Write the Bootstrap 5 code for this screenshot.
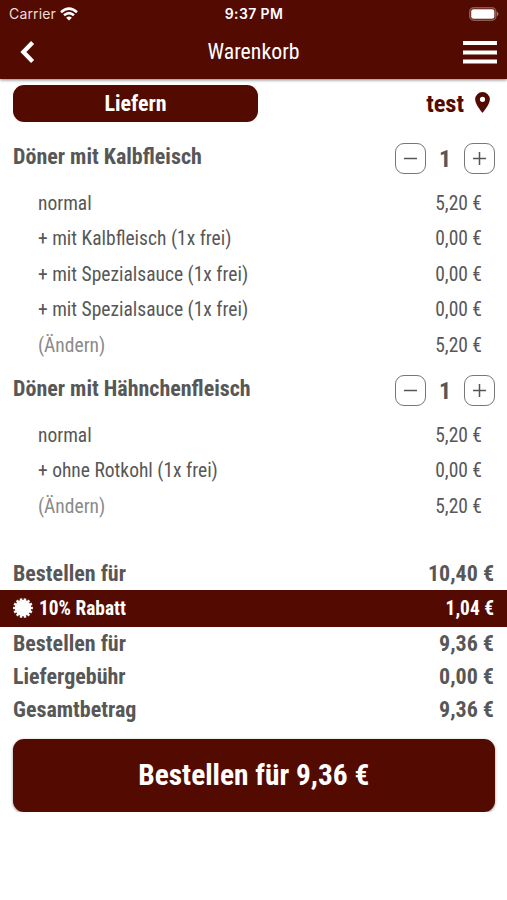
<!DOCTYPE html>
<html lang="de">
<head>
<meta charset="utf-8">
<meta name="viewport" content="width=device-width, initial-scale=1">
<title>Warenkorb</title>
<link href="https://cdn.jsdelivr.net/npm/bootstrap@5.3.0/dist/css/bootstrap.min.css" rel="stylesheet">
<style>
:root { --brand: #530b01; --ink: #575757; }
body { font-family: "Roboto Condensed", Roboto, sans-serif; font-stretch: 75%; color: var(--ink); background: #fff; line-height: 1; overflow: hidden; }
svg { display: block; }
.app-top { background: var(--brand); color: #fff; height: 79px; box-shadow: 0 1px 3px rgba(0,0,0,.5); }
.status { height: 27px; font-family: Inter, sans-serif; font-stretch: 100%; font-size: 14px; padding: 0 8px 0 9px; }
.carrier { color: #f0dcd8; letter-spacing: .15px; }
.clock { font-weight: 600; font-size: 14px; letter-spacing: .4px; }
.titlebar { height: 50px; padding: 0 10px; }
.back { margin-left: 10px; }
.title { font-size: 21.8px; font-weight: 400; }
.side { flex: 1 1 0; }
.mode { height: 52px; padding: 6px 17px 0 13px; }
.btn-mode { width: 245px; height: 37px; border-radius: 11px; background: var(--brand); color: #fff; font-weight: 700; font-size: 22px; line-height: 1; }
.place { color: var(--brand); font-size: 24.5px; font-weight: 700; gap: 11px; padding-top: 7px; }
.pin { margin-bottom: 3px; }
.item-head { height: 54.5px; padding: 0 12px 0 13px; }
.item-name { font-size: 22px; font-weight: 700; padding-bottom: 2px; }
.step { width: 31px; height: 31px; border: 1.3px solid #777; border-radius: 9px; color: #555; background: #fff; }
.qty { width: 38px; font-size: 24px; font-weight: 700; padding-top: 1px; }
.line { height: 35.5px; padding: 0 25px 0 38px; font-size: 19.5px; }
.change { color: #8a8a8a; }
.totals { padding-top: 33px; }
.sum { height: 33px; padding: 0 13px; font-size: 22px; font-weight: 700; }
.discount { height: 37px; background: var(--brand); color: #fff; padding: 1px 13px 0; font-size: 19.4px; font-weight: 700; }
.seal { margin: 0 6px 2px 0; }
.order { height: 73px; margin: 12.5px 12.5px 0 13px; border-radius: 11px; background: var(--brand); color: #fff; font-size: 29.4px; font-weight: 700; line-height: 1; box-shadow: 0 1px 3px rgba(0,0,0,.45); }
.order span { display: block; padding-top: 2px; }
</style>
</head>
<body>
<header class="app-top">
  <div class="status d-flex align-items-center">
    <div class="side d-flex align-items-center"><span class="carrier me-1">Carrier</span>
      <svg width="18" height="14" viewBox="0 0 18 14" fill="none" stroke="#fff" stroke-width="2.5"><path d="M1 5.2Q9-2 17 5.2M4 8.300q5-4.400 10 0"/><path d="M9 13.600 6.100 10.700q2.900-2.500 5.800 0z" fill="#fff" stroke="none"/></svg>
    </div>
    <span class="clock">9:37 PM</span>
    <div class="side d-flex justify-content-end">
      <svg width="30" height="14" viewBox="0 0 30 14"><rect x=".8" y=".8" width="26" height="12.400" rx="4" fill="none" stroke="#8d5a52" stroke-width="1.600"/><rect x="2.200" y="2.200" width="23.200" height="9.600" rx="2.300" fill="#fff"/><path d="M28 4.800q3 2.200 0 4.400z" fill="#a37b75"/></svg>
    </div>
  </div>
  <nav class="titlebar d-flex align-items-center">
    <div class="side"><svg class="back" width="15" height="22" viewBox="0 0 15 22" fill="none" stroke="#fff" stroke-width="4.300"><path d="M12.600 1.600 3.400 11l9.200 9.400"/></svg></div>
    <h1 class="title m-0">Warenkorb</h1>
    <div class="side d-flex justify-content-end"><svg width="34" height="23" viewBox="0 0 34 23" fill="#fff"><path d="M0 0h34v4H0zM0 9.400h34v4H0zM0 18.600h34v4H0z"/></svg></div>
  </nav>
</header>

<main>
  <section class="mode d-flex justify-content-between align-items-start">
    <button class="btn btn-mode p-0 border-0">Liefern</button>
    <div class="place d-flex align-items-center"><span>test</span>
      <svg class="pin" width="15" height="21" viewBox="0 0 14 20" fill="#530b01"><path fill-rule="evenodd" d="M7 0a7 7 0 0 0-7 7c0 5.200 7 13 7 13s7-7.800 7-13a7 7 0 0 0-7-7zm0 4.500a2.500 2.500 0 1 1 0 5 2.500 2.500 0 0 1 0-5z"/></svg>
    </div>
  </section>

  <section>
    <div class="item-head d-flex align-items-center justify-content-between">
      <span class="item-name">Döner mit Kalbfleisch</span>
      <div class="d-flex align-items-center">
        <button class="step p-0 d-flex align-items-center justify-content-center" aria-label="Weniger"><svg width="13" height="13" viewBox="0 0 13 13" stroke="currentColor" stroke-width="1.500"><path d="M0 6.500h13"/></svg></button>
        <span class="qty text-center">1</span>
        <button class="step p-0 d-flex align-items-center justify-content-center" aria-label="Mehr"><svg width="13" height="13" viewBox="0 0 13 13" stroke="currentColor" stroke-width="1.500"><path d="M0 6.500h13M6.500 0v13"/></svg></button>
      </div>
    </div>
    <div class="line d-flex align-items-center justify-content-between"><span>normal</span><span>5,20 €</span></div>
    <div class="line d-flex align-items-center justify-content-between"><span>+ mit Kalbfleisch (1x frei)</span><span>0,00 €</span></div>
    <div class="line d-flex align-items-center justify-content-between"><span>+ mit Spezialsauce (1x frei)</span><span>0,00 €</span></div>
    <div class="line d-flex align-items-center justify-content-between"><span>+ mit Spezialsauce (1x frei)</span><span>0,00 €</span></div>
    <div class="line d-flex align-items-center justify-content-between"><span class="change">(Ändern)</span><span>5,20 €</span></div>
  </section>

  <section>
    <div class="item-head d-flex align-items-center justify-content-between">
      <span class="item-name">Döner mit Hähnchenfleisch</span>
      <div class="d-flex align-items-center">
        <button class="step p-0 d-flex align-items-center justify-content-center" aria-label="Weniger"><svg width="13" height="13" viewBox="0 0 13 13" stroke="currentColor" stroke-width="1.500"><path d="M0 6.500h13"/></svg></button>
        <span class="qty text-center">1</span>
        <button class="step p-0 d-flex align-items-center justify-content-center" aria-label="Mehr"><svg width="13" height="13" viewBox="0 0 13 13" stroke="currentColor" stroke-width="1.500"><path d="M0 6.500h13M6.500 0v13"/></svg></button>
      </div>
    </div>
    <div class="line d-flex align-items-center justify-content-between"><span>normal</span><span>5,20 €</span></div>
    <div class="line d-flex align-items-center justify-content-between"><span>+ ohne Rotkohl (1x frei)</span><span>0,00 €</span></div>
    <div class="line d-flex align-items-center justify-content-between"><span class="change">(Ändern)</span><span>5,20 €</span></div>
  </section>

  <section class="totals">
    <div class="sum d-flex align-items-center justify-content-between"><span>Bestellen für</span><span>10,40 €</span></div>
    <div class="discount d-flex align-items-center justify-content-between">
      <div class="d-flex align-items-center"><svg class="seal" width="20" height="20" viewBox="-10 -10 20 20"><circle r="8.300" fill="#fff"/><circle r="8.700" fill="none" stroke="#fff" stroke-width="2.400" pathLength="28" stroke-dasharray="1.200 .800" stroke-dashoffset=".600"/></svg><span>10% Rabatt</span></div>
      <span>1,04 €</span>
    </div>
    <div class="sum d-flex align-items-center justify-content-between"><span>Bestellen für</span><span>9,36 €</span></div>
    <div class="sum d-flex align-items-center justify-content-between"><span>Liefergebühr</span><span>0,00 €</span></div>
    <div class="sum d-flex align-items-center justify-content-between"><span>Gesamtbetrag</span><span>9,36 €</span></div>
  </section>
  <div class="d-flex"><button class="btn order p-0 border-0 flex-grow-1"><span>Bestellen für 9,36 €</span></button></div>
</main>
<script src="https://cdn.jsdelivr.net/npm/bootstrap@5.3.0/dist/js/bootstrap.bundle.min.js"></script>
</body>
</html>
